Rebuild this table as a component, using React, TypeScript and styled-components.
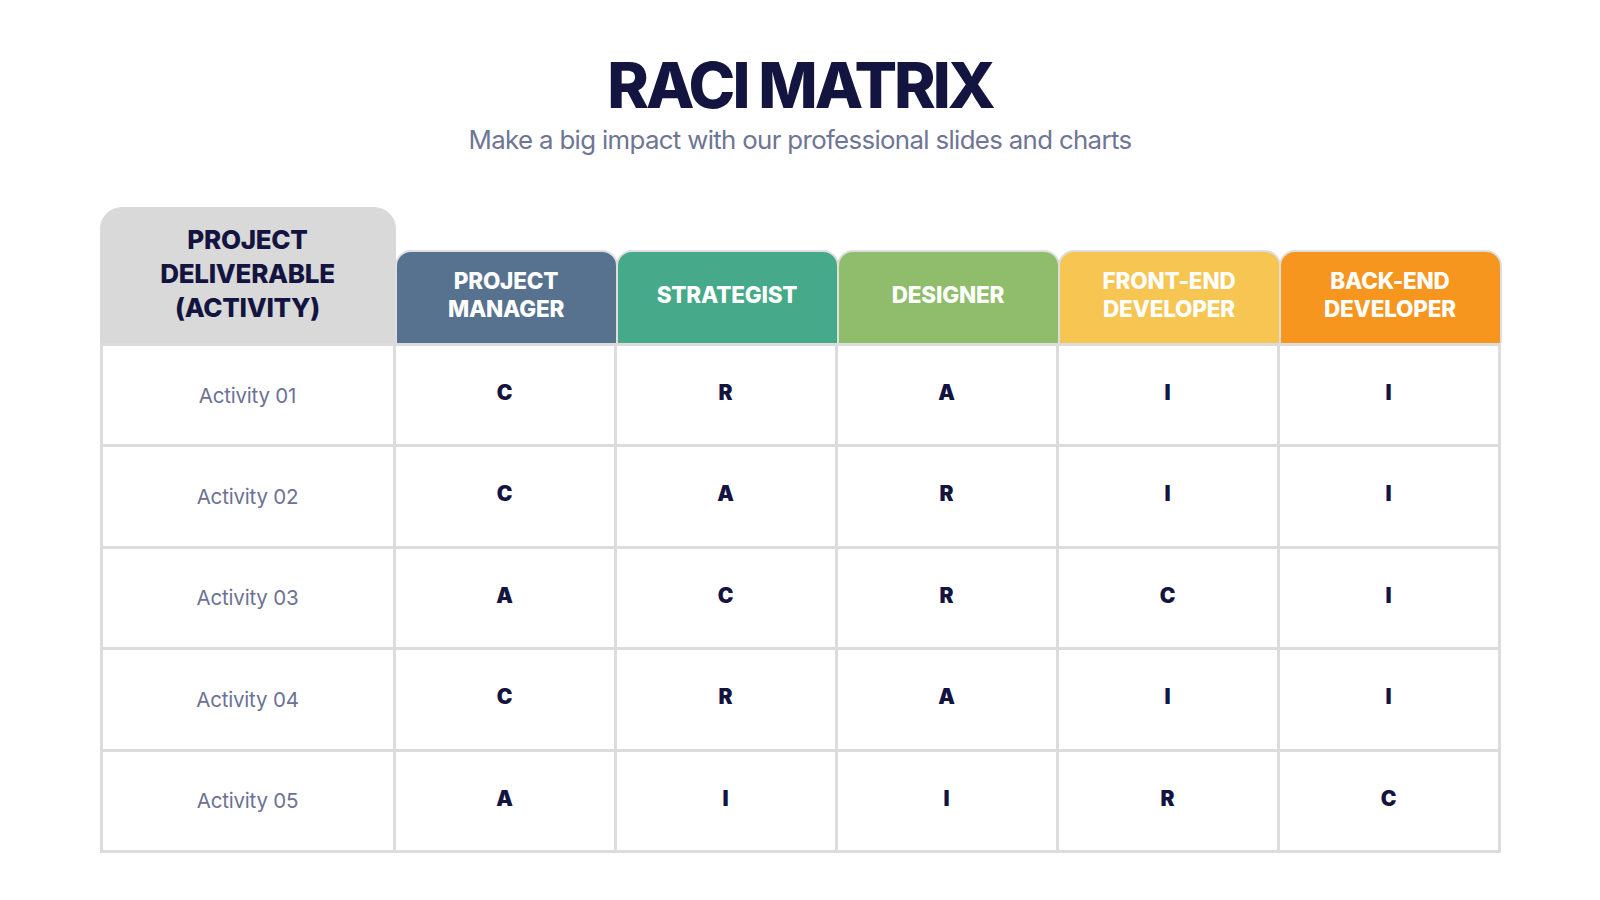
import React from "react";
import styled, { createGlobalStyle } from "styled-components";

const GlobalStyle = createGlobalStyle`
  html, body {
    margin: 0;
    padding: 0;
    background: #ffffff;
  }
  * { box-sizing: border-box; }
`;

const Page = styled.div`
  width: 1600px;
  height: 900px;
  display: flex;
  flex-direction: column;
  align-items: center;
  font-family: Inter, "Liberation Sans", sans-serif;
  background: #ffffff;
`;

const Title = styled.h1`
  margin: 52px 0 0;
  font-size: 63px;
  line-height: 66px;
  font-weight: 800;
  letter-spacing: -3px;
  color: #13143f;
`;

const Subtitle = styled.p`
  margin: 6px 0 0;
  font-size: 25.8px;
  line-height: 32px;
  font-weight: 400;
  letter-spacing: -0.65px;
  color: #6e7595;
`;

const Matrix = styled.div`
  margin-top: 51px;
  width: 1401px;
  display: grid;
  grid-template-columns: 296px repeat(5, 1fr);
  grid-template-rows: 136px 104px repeat(4, 101.5px);
`;

const CornerHead = styled.div`
  background: #d9d9d9;
  border-radius: 22px 22px 0 0;
  display: flex;
  align-items: center;
  justify-content: center;
  text-align: center;
  font-size: 26px;
  line-height: 34px;
  font-weight: 800;
  letter-spacing: -0.3px;
  color: #13143f;
  padding-bottom: 2px;
`;

const RoleHead = styled.div<{ $bg: string }>`
  align-self: end;
  height: 93px;
  margin: 0 -1px;
  background: ${(p) => p.$bg};
  border: 2px solid #dedede;
  border-bottom: none;
  border-radius: 16px 16px 0 0;
  display: flex;
  align-items: center;
  justify-content: center;
  text-align: center;
  font-size: 22.5px;
  line-height: 28px;
  font-weight: 800;
  letter-spacing: -0.2px;
  color: #ffffff;
  padding-bottom: 5px;
`;

const Cell = styled.div<{ $first?: boolean; $top?: boolean }>`
  display: flex;
  align-items: center;
  justify-content: center;
  border-right: 3px solid #dcdcdc;
  border-bottom: 3px solid #dcdcdc;
  border-left: ${(p) => (p.$first ? "3px solid #dcdcdc" : "none")};
  border-top: ${(p) => (p.$top ? "3px solid #dcdcdc" : "none")};
  background: #ffffff;
`;

const ActivityLabel = styled.span`
  font-size: 20.5px;
  font-weight: 400;
  letter-spacing: -0.2px;
  color: #6b7294;
`;

const Letter = styled.span`
  font-size: 21px;
  font-weight: 900;
  color: #13143f;
  padding-bottom: 5px;
`;

const roles = [
  { label: ["PROJECT", "MANAGER"], bg: "#56728f" },
  { label: ["STRATEGIST"], bg: "#45a98a" },
  { label: ["DESIGNER"], bg: "#8fbd6b" },
  { label: ["FRONT-END", "DEVELOPER"], bg: "#f6c552" },
  { label: ["BACK-END", "DEVELOPER"], bg: "#f6961f" },
];

const rows = [
  { name: "Activity 01", v: ["C", "R", "A", "I", "I"] },
  { name: "Activity 02", v: ["C", "A", "R", "I", "I"] },
  { name: "Activity 03", v: ["A", "C", "R", "C", "I"] },
  { name: "Activity 04", v: ["C", "R", "A", "I", "I"] },
  { name: "Activity 05", v: ["A", "I", "I", "R", "C"] },
];

export default function App() {
  return (
    <>
      <GlobalStyle />
      <Page>
        <Title>RACI MATRIX</Title>
        <Subtitle>Make a big impact with our professional slides and charts</Subtitle>
        <Matrix>
          <CornerHead>
            PROJECT
            <br />
            DELIVERABLE
            <br />
            (ACTIVITY)
          </CornerHead>
          {roles.map((r, i) => (
            <RoleHead key={i} $bg={r.bg}>
              <div>
                {r.label.map((l, j) => (
                  <React.Fragment key={j}>
                    {j > 0 && <br />}
                    {l}
                  </React.Fragment>
                ))}
              </div>
            </RoleHead>
          ))}
          {rows.map((row, ri) => (
            <React.Fragment key={ri}>
              <Cell $first $top={ri === 0}>
                <ActivityLabel>{row.name}</ActivityLabel>
              </Cell>
              {row.v.map((val, ci) => (
                <Cell key={ci} $top={ri === 0}>
                  <Letter>{val}</Letter>
                </Cell>
              ))}
            </React.Fragment>
          ))}
        </Matrix>
      </Page>
    </>
  );
}
